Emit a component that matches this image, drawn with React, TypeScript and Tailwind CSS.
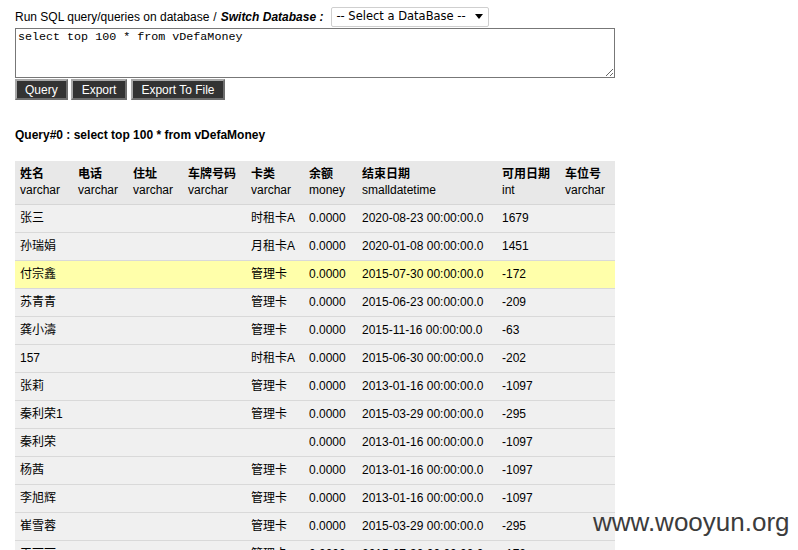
import { useState } from 'react';

const cols = [
  { name: '姓名', type: 'varchar', w: 'w-[58px]' },
  { name: '电话', type: 'varchar', w: 'w-[55px]' },
  { name: '住址', type: 'varchar', w: 'w-[55px]' },
  { name: '车牌号码', type: 'varchar', w: 'w-[63px]' },
  { name: '卡类', type: 'varchar', w: 'w-[58px]' },
  { name: '余额', type: 'money', w: 'w-[53px]' },
  { name: '结束日期', type: 'smalldatetime', w: 'w-[140px]' },
  { name: '可用日期', type: 'int', w: 'w-[63px]' },
  { name: '车位号', type: 'varchar', w: 'w-[55px]' },
];

const rows = [
  ['张三', '时租卡A', '2020-08-23', '1679'],
  ['孙瑞娟', '月租卡A', '2020-01-08', '1451'],
  ['付宗鑫', '管理卡', '2015-07-30', '-172'],
  ['苏青青', '管理卡', '2015-06-23', '-209'],
  ['龚小濤', '管理卡', '2015-11-16', '-63'],
  ['157', '时租卡A', '2015-06-30', '-202'],
  ['张莉', '管理卡', '2013-01-16', '-1097'],
  ['秦利荣1', '管理卡', '2015-03-29', '-295'],
  ['秦利荣', '', '2013-01-16', '-1097'],
  ['杨茜', '管理卡', '2013-01-16', '-1097'],
  ['李旭辉', '管理卡', '2013-01-16', '-1097'],
  ['崔雪蓉', '管理卡', '2015-03-29', '-295'],
  ['王丽丽', '管理卡', '2015-07-30', '-172'],
];

const font = "font-['Liberation_Sans','Noto_Sans_CJK_SC',sans-serif]";

export default function App() {
  const [sql, setSql] = useState('select top 100 * from vDefaMoney');
  const [hover] = useState(2);

  const btn =
    'h-[21px] bg-[#333333] text-white text-[12px] leading-none border-2 border-t-[#a8a8a8] border-l-[#a8a8a8] border-r-[#6e6e6e] border-b-[#6e6e6e]';

  return (
    <div className={`relative min-h-[550px] bg-white pl-[15px] pt-[7px] text-black ${font}`}>
      <div className="flex h-[20px] items-center text-[12px]">
        <span>Run SQL query/queries on database</span>
        <span className="ml-[4px]">/</span>
        <span className="ml-[4px] font-bold italic">Switch Database :</span>
        <div className="relative ml-[8px]">
          <select className="h-[20px] w-[158px] appearance-none rounded-[2px] border border-[#cfcfcf] bg-white pl-[4px] font-['DejaVu_Sans',sans-serif] text-[11.5px] text-black outline-none">
            <option>-- Select a DataBase --</option>
          </select>
          <svg className="pointer-events-none absolute right-[6px] top-[7px]" width="8" height="5" viewBox="0 0 8 5">
            <path d="M0 0 H8 L4 5 Z" fill="#000" />
          </svg>
        </div>
      </div>

      <textarea
        value={sql}
        onChange={(e) => setSql(e.target.value)}
        className="mt-[1px] block h-[50px] w-[600px] border border-[#777777] px-[2px] py-[1px] font-['Liberation_Mono',monospace] text-[11.7px] leading-[14px] outline-none"
      />

      <div className="mt-[1px] flex">
        <button className={`${btn} px-[8px]`}>Query</button>
        <button className={`${btn} ml-[3px] px-[9px]`}>Export</button>
        <button className={`${btn} ml-[4px] px-[8px]`}>Export To File</button>
      </div>

      <div className="mt-[27px] text-[12px] font-bold leading-[16px]">
        Query#0 : select top 100 * from vDefaMoney
      </div>

      <table className="mt-[18px] w-[600px] table-fixed border-collapse text-[12px]">
        <colgroup>
          {cols.map((c) => (
            <col key={c.name} className={c.w} />
          ))}
        </colgroup>
        <thead>
          <tr className="bg-[#e8e8e8]">
            {cols.map((c) => (
              <th
                key={c.name}
                className="h-[43px] border-b border-[#d6d6d6] pl-[5px] pb-[1px] text-left align-middle font-normal leading-[16px] whitespace-nowrap"
              >
                <div className="font-bold">{c.name}</div>
                <div>{c.type}</div>
              </th>
            ))}
          </tr>
        </thead>
        <tbody>
          {rows.map((r, i) => (
            <tr key={i} className={i === hover ? 'bg-[#ffffaa]' : 'bg-[#f0f0f0]'}>
              {[r[0], '', '', '', r[1], '0.0000', `${r[2]} 00:00:00.0`, r[3], ''].map((v, j) => (
                <td
                  key={j}
                  className="h-[28px] border-t border-b border-t-white border-b-[#d9d9d9] pl-[5px] align-middle whitespace-nowrap"
                >
                  {v}
                </td>
              ))}
            </tr>
          ))}
        </tbody>
      </table>

      <div className="absolute left-[593px] top-[507px] font-['Liberation_Sans',sans-serif] text-[26px] leading-[30px] text-[#3c3c3c]">
        www.wooyun.org
      </div>
    </div>
  );
}
